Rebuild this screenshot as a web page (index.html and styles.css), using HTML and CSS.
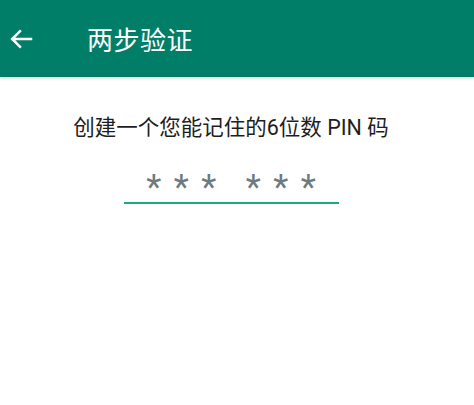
FILE: index.html
```html
<!DOCTYPE html>
<html lang="zh">
<head>
  <meta charset="UTF-8">
  <title>两步验证</title>
  <link rel="stylesheet" href="styles.css">
</head>
<body>

  <header class="toolbar">
    <svg class="back" width="24" height="24" viewBox="0 0 24 24">
      <path d="M22 12H3.5M11 4.2L3.2 12 11 19.8" fill="none" stroke="#fff" stroke-width="2.5" stroke-linecap="square"/>
    </svg>
    <h1>两步验证</h1>
  </header>

  <main class="content">
    <p class="prompt">创建一个您能记住的6位数 PIN 码</p>

    <div class="pin-field">
      <div class="pin-group">
        <span>*</span><span>*</span><span>*</span>
      </div>
      <div class="pin-group">
        <span>*</span><span>*</span><span>*</span>
      </div>
    </div>
  </main>

</body>
</html>
```

FILE: styles.css
```css
body {
  margin: 0;
  font-family: Roboto, "Noto Sans CJK SC", sans-serif;
  background: #fff;
}

.toolbar {
  height: 77px;
  background: #017e68;
  display: flex;
  align-items: center;
  padding-left: 9px;
  box-shadow: 0 2px 3px rgba(0,0,0,0.12);
}

.back {
  display: block;
}

.toolbar h1 {
  margin: 0 0 0 54px;
  color: #fff;
  font-size: 26px;
  font-weight: normal;
  letter-spacing: 0.5px;
}

.content {
  display: flex;
  flex-direction: column;
  align-items: center;
  padding: 33px 12px 0 0;
}

.prompt {
  margin: 0;
  font-size: 21.5px;
  color: #1e1e1e;
}

.pin-field {
  margin-top: 31px;
  width: 215px;
  border-bottom: 2px solid #1ea884;
  display: flex;
  justify-content: center;
  gap: 17px;
  padding-bottom: 2px;
  color: #6d7a80;
  font-size: 35px;
  line-height: 32px;
}

.pin-group {
  display: flex;
}

.pin-group span {
  width: 27.5px;
  text-align: center;
  height: 28px;
}
```
